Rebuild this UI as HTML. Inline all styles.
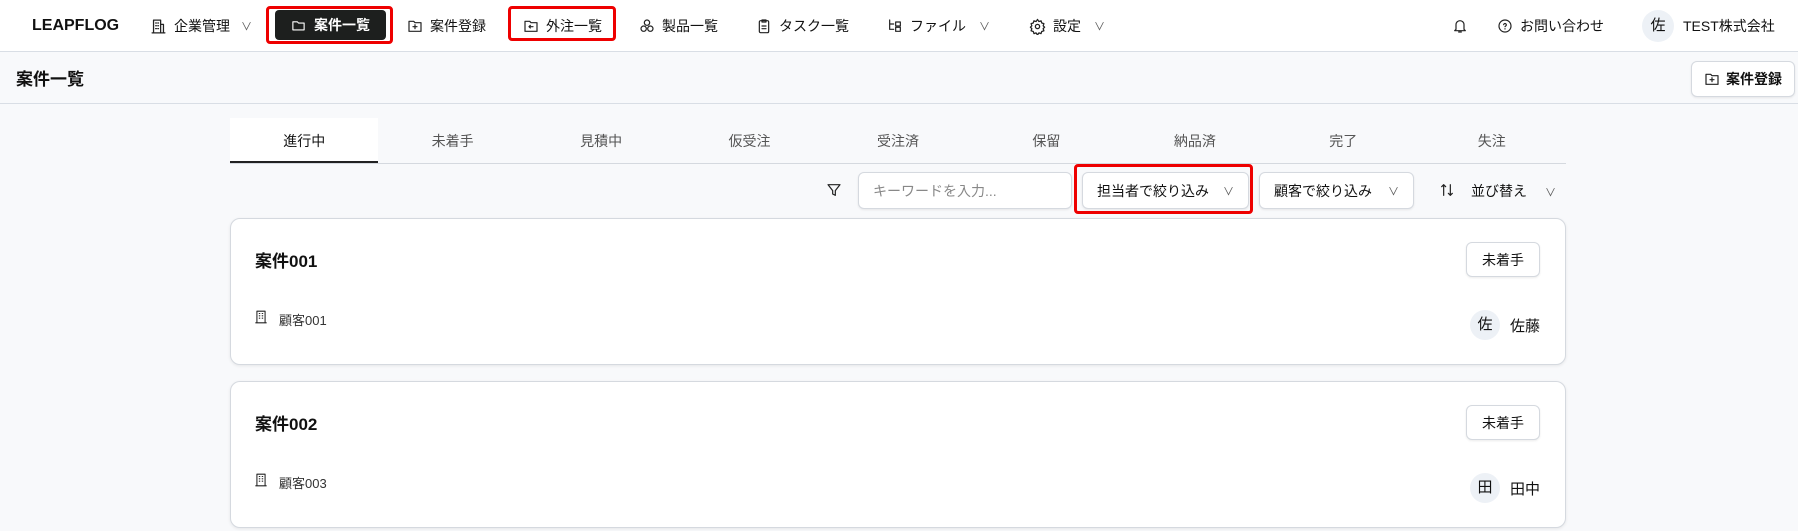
<!DOCTYPE html>
<html><head><meta charset="utf-8"><style>
*{box-sizing:border-box;margin:0;padding:0}
body{width:1798px;height:531px;overflow:hidden;background:#f8f9fb;font-family:"Liberation Sans","Noto Sans CJK JP",sans-serif;color:#111;font-size:14px;position:relative}
.abs{position:absolute}
.hdr{left:0;top:0;width:1798px;height:52px;background:#fff;border-bottom:1px solid #d9dee5}
.nav{top:0;height:52px;display:flex;align-items:center;gap:7px;font-size:14px}
svg{fill:none;stroke:#222;stroke-width:1.8;stroke-linecap:round;stroke-linejoin:round}
.red{border:3px solid #e00;border-radius:4px}
.sub{left:0;top:52px;width:1798px;height:52px;border-bottom:1px solid #d9dee5}
.btn{background:#fff;border:1px solid #d5d9df;border-radius:6px;box-shadow:0 1px 2px rgba(0,0,0,.08);display:flex;align-items:center}
.tabs{left:230px;top:118px;width:1336px;height:46px;border-bottom:1px solid #d5d9df;display:flex}
.tabs div{flex:1;text-align:center;line-height:46px;font-size:14px;color:#555}
.tabs .on{background:#fff;color:#111;border-bottom:2px solid #222}
.card{left:230px;width:1336px;height:147px;background:#fff;border:1px solid #d5d9df;border-radius:10px;box-shadow:0 1px 3px rgba(0,0,0,.08)}
.av{width:30px;height:30px;border-radius:50%;background:#edf1f6;text-align:center;line-height:30px;font-size:15px}
.ch{font-size:11px;color:#555}
</style></head><body>
<div class="abs hdr"></div>
<div class="abs nav" style="left:32px;font-weight:bold;font-size:16px">LEAPFLOG</div>
<div class="abs nav" style="left:150px"><svg width="17" height="17" viewBox="0 0 24 24"><path d="M5 21V3h10v18M15 9h4v12M3 21h18M8 7h1M11 7h1M8 11h1M11 11h1M8 15h1M11 15h1"/></svg>企業管理<span class="ch" style="margin-left:4px">∨</span></div>
<div class="abs red" style="left:266px;top:6px;width:127px;height:38px"></div>
<div class="abs" style="left:275px;top:10px;width:111px;height:30px;background:#1d1f1e;border-radius:4px;color:#fff;font-weight:bold;display:flex;align-items:center;justify-content:center;gap:8px"><svg width="15" height="15" viewBox="0 0 24 24" style="stroke:#fff"><path d="M3 6h7l2 2h9v11H3z"/></svg>案件一覧</div>
<div class="abs nav" style="left:407px"><svg width="16" height="16" viewBox="0 0 24 24"><path d="M3 5h7l2 2h9v13H3zM12 10v6M9 13h6"/></svg>案件登録</div>
<div class="abs red" style="left:508px;top:6px;width:108px;height:35px"></div>
<div class="abs nav" style="left:523px"><svg width="16" height="16" viewBox="0 0 24 24"><path d="M3 5h7l2 2h9v13H3zM15 13H9M11 11l-2 2 2 2"/></svg>外注一覧</div>
<div class="abs nav" style="left:639px"><svg width="16" height="16" viewBox="0 0 24 24"><circle cx="12" cy="7" r="4"/><circle cx="7" cy="16" r="4"/><circle cx="17" cy="16" r="4"/></svg>製品一覧</div>
<div class="abs nav" style="left:756px"><svg width="16" height="16" viewBox="0 0 24 24"><rect x="5" y="4" width="14" height="18" rx="2"/><path d="M9 3h6v3H9zM9 12h6M9 16h6"/></svg>タスク一覧</div>
<div class="abs nav" style="left:887px"><svg width="16" height="16" viewBox="0 0 24 24"><path d="M4 3v14h6M4 9h6M13 6h7v6h-7zM13 14h7v6h-7z"/></svg>ファイル<span class="ch" style="margin-left:6px">∨</span></div>
<div class="abs nav" style="left:1029px"><svg width="17" height="17" viewBox="0 0 24 24"><circle cx="12" cy="12" r="3"/><path d="M12 2l2 3 3-1 1 3 3 1-1 3 2 2-2 2 1 3-3 1-1 3-3-1-2 3-2-3-3 1-1-3-3-1 1-3-2-2 2-2-1-3 3-1 1-3 3 1z"/></svg>設定<span class="ch" style="margin-left:6px">∨</span></div>
<div class="abs nav" style="left:1452px"><svg width="16" height="16" viewBox="0 0 24 24"><path d="M6 17V10a6 6 0 0 1 12 0v7l2 2H4zM10 21h4"/></svg></div>
<div class="abs nav" style="left:1497px"><svg width="16" height="16" viewBox="0 0 24 24"><circle cx="12" cy="12" r="9"/><path d="M10 10a2 2 0 1 1 3 2l-1 1M12 16v.5"/></svg>お問い合わせ</div>
<div class="abs av" style="left:1642px;top:10px;width:32px;height:32px;line-height:32px">佐</div>
<div class="abs nav" style="left:1683px">TEST株式会社</div>

<div class="abs sub"></div>
<div class="abs" style="left:16px;top:65px;font-size:17px;font-weight:bold">案件一覧</div>
<div class="abs btn" style="left:1691px;top:61px;width:104px;height:36px;justify-content:center;gap:6px;font-weight:bold;font-size:14px"><svg width="16" height="16" viewBox="0 0 24 24"><path d="M3 5h7l2 2h9v13H3zM12 10v6M9 13h6"/></svg>案件登録</div>

<div class="abs tabs"><div class="on">進行中</div><div>未着手</div><div>見積中</div><div>仮受注</div><div>受注済</div><div>保留</div><div>納品済</div><div>完了</div><div>失注</div></div>

<svg class="abs" style="left:826px;top:182px" width="16" height="16" viewBox="0 0 24 24" stroke-width="2.2"><path d="M3 4h18l-7 9v7l-4-2v-5z"/></svg>
<div class="abs btn" style="left:858px;top:172px;width:214px;height:37px;padding-left:14px;color:#888;font-size:14px">キーワードを入力...</div>
<div class="abs red" style="left:1074px;top:164px;width:179px;height:50px"></div>
<div class="abs btn" style="left:1082px;top:172px;width:167px;height:37px;padding:0 14px;font-size:14px;justify-content:space-between">担当者で絞り込み<span class="ch">∨</span></div>
<div class="abs btn" style="left:1259px;top:172px;width:155px;height:37px;padding:0 14px;font-size:14px;justify-content:space-between">顧客で絞り込み<span class="ch">∨</span></div>
<svg class="abs" style="left:1439px;top:182px" width="16" height="16" viewBox="0 0 24 24"><path d="M7 20V4M4 7l3-3 3 3M17 4v16M14 17l3 3 3-3"/></svg>
<div class="abs" style="left:1471px;top:181px;font-size:14px">並び替え<span class="ch" style="margin-left:18px">∨</span></div>

<div class="abs card" style="top:218px"></div>
<div class="abs" style="left:255px;top:247px;font-size:17px;font-weight:bold">案件001</div>
<div class="abs btn" style="left:1466px;top:242px;width:74px;height:35px;justify-content:center;font-size:14px">未着手</div>
<svg class="abs" style="left:254px;top:310px" width="14" height="14" viewBox="0 0 24 24"><path d="M5 22V2h14v20M3 22h18M9 6h1M14 6h1M9 10h1M14 10h1M9 14h1M14 14h1"/></svg>
<div class="abs" style="left:279px;top:310px;font-size:13px;color:#333">顧客001</div>
<div class="abs av" style="left:1470px;top:310px">佐</div>
<div class="abs" style="left:1510px;top:315px;font-size:15px">佐藤</div>

<div class="abs card" style="top:381px"></div>
<div class="abs" style="left:255px;top:410px;font-size:17px;font-weight:bold">案件002</div>
<div class="abs btn" style="left:1466px;top:405px;width:74px;height:35px;justify-content:center;font-size:14px">未着手</div>
<svg class="abs" style="left:254px;top:473px" width="14" height="14" viewBox="0 0 24 24"><path d="M5 22V2h14v20M3 22h18M9 6h1M14 6h1M9 10h1M14 10h1M9 14h1M14 14h1"/></svg>
<div class="abs" style="left:279px;top:473px;font-size:13px;color:#333">顧客003</div>
<div class="abs av" style="left:1470px;top:473px">田</div>
<div class="abs" style="left:1510px;top:478px;font-size:15px">田中</div>
</body></html>
